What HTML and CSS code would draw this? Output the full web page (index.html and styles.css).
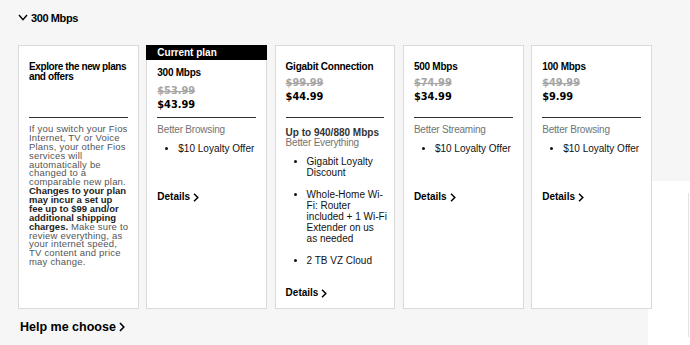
FILE: index.html
```html
<!DOCTYPE html>
<html lang="en">
<head>
<meta charset="utf-8">
<title>Plans</title>
<link rel="stylesheet" href="styles.css">
</head>
<body>
<div class="page">
  <div class="toggle">
    <svg class="chev-down" width="10" height="7" viewBox="0 0 10 7"><polyline points="1,1 5,5.6 9,1" fill="none" stroke="#000" stroke-width="1.4"/></svg>
    <span>300 Mbps</span>
  </div>

  <div class="cards">
    <div class="card">
      <div class="head intro-head">
        <div class="intro-title">Explore the new plans and offers</div>
      </div>
      <p class="intro-body">If you switch your Fios<br>Internet, TV or Voice<br>Plans, your other Fios<br>services will<br>automatically be<br>changed to a<br>comparable new plan.<br><b>Changes to your plan<br>may incur a set up<br>fee up to $99 and/or<br>additional shipping<br>charges.</b> Make sure to<br>review everything, as<br>your internet speed,<br>TV content and price<br>may change.</p>
    </div>

    <div class="card current">
      <div class="head">
        <div class="badge">Current plan</div>
        <div class="title">300 Mbps</div>
        <div class="old">$53.99</div>
        <div class="new">$43.99</div>
      </div>
      <div class="desc">Better Browsing</div>
      <ul class="features">
        <li>$10 Loyalty Offer</li>
      </ul>
      <a class="details">Details <svg width="6" height="9" viewBox="0 0 6 9"><polyline points="1,0.8 4.8,4.5 1,8.2" fill="none" stroke="#000" stroke-width="1.5"/></svg></a>
    </div>

    <div class="card">
      <div class="head">
        <div class="title">Gigabit Connection</div>
        <div class="old">$99.99</div>
        <div class="new">$44.99</div>
      </div>
      <div class="desc"><div class="speed">Up to 940/880 Mbps</div>Better Everything</div>
      <ul class="features">
        <li>Gigabit Loyalty Discount</li>
        <li class="nowrap">Whole-Home Wi-<br>Fi: Router<br>included + 1 Wi-Fi<br>Extender on us<br>as needed</li>
        <li>2 TB VZ Cloud</li>
      </ul>
      <a class="details">Details <svg width="6" height="9" viewBox="0 0 6 9"><polyline points="1,0.8 4.8,4.5 1,8.2" fill="none" stroke="#000" stroke-width="1.5"/></svg></a>
    </div>

    <div class="card">
      <div class="head">
        <div class="title">500 Mbps</div>
        <div class="old">$74.99</div>
        <div class="new">$34.99</div>
      </div>
      <div class="desc">Better Streaming</div>
      <ul class="features">
        <li>$10 Loyalty Offer</li>
      </ul>
      <a class="details">Details <svg width="6" height="9" viewBox="0 0 6 9"><polyline points="1,0.8 4.8,4.5 1,8.2" fill="none" stroke="#000" stroke-width="1.5"/></svg></a>
    </div>

    <div class="card">
      <div class="head">
        <div class="title">100 Mbps</div>
        <div class="old">$49.99</div>
        <div class="new">$9.99</div>
      </div>
      <div class="desc">Better Browsing</div>
      <ul class="features">
        <li>$10 Loyalty Offer</li>
      </ul>
      <a class="details">Details <svg width="6" height="9" viewBox="0 0 6 9"><polyline points="1,0.8 4.8,4.5 1,8.2" fill="none" stroke="#000" stroke-width="1.5"/></svg></a>
    </div>
  </div>

  <a class="help">Help me choose <svg width="6" height="10" viewBox="0 0 6 10"><polyline points="1,1 4.8,5 1,9" fill="none" stroke="#000" stroke-width="1.6"/></svg></a>
</div>
<div class="side-panel"><div class="side-line"></div></div>
</body>
</html>
```

FILE: styles.css
```css
html, body {
  background: #f6f6f6;
}
body {
  margin: 0;
  font-family: "Liberation Sans", Arial, sans-serif;
  color: #000;
  overflow: hidden;
}
.page {
  padding: 10px 0 0 18px;
}
.toggle {
  display: flex;
  align-items: center;
  gap: 3px;
  height: 15px;
  font-size: 11px;
  font-weight: bold;
  letter-spacing: -0.4px;
}
.chev-down {
  display: block;
}
.cards {
  display: flex;
  gap: 7.5px;
  width: 634px;
  margin-top: 20px;
  align-items: stretch;
}
.card {
  flex: 1 1 0;
  min-width: 0;
  background: #fff;
  border: 1px solid #dadada;
  padding: 0 10px 9px;
  display: flex;
  flex-direction: column;
  position: relative;
  z-index: 1;
}
.head {
  box-sizing: border-box;
  height: 72px;
  padding-top: 15px;
  border-bottom: 1px solid #333;
}
.intro-head {
  padding-top: 16px;
}
.intro-title {
  font-size: 10px;
  font-weight: bold;
  line-height: 10px;
  letter-spacing: -0.4px;
}
.intro-body {
  margin: 7px 0 0;
  font-size: 9.5px;
  line-height: 8.87px;
  letter-spacing: 0.2px;
  color: #555;
  white-space: nowrap;
}
.intro-body b {
  color: #1d1d1d;
  letter-spacing: 0;
}
.current .head {
  padding-top: 0;
}
.badge {
  margin: -1px -11px 7px;
  height: 15px;
  line-height: 15px;
  padding-left: 11px;
  background: #000;
  color: #fff;
  font-size: 10px;
  font-weight: bold;
}
.title {
  font-size: 10px;
  font-weight: bold;
  line-height: 12px;
  letter-spacing: -0.25px;
}
.old, .new {
  font-family: "DejaVu Sans", sans-serif;
  font-weight: bold;
  font-size: 9.8px;
  line-height: 14px;
}
.old {
  margin-top: 3px;
  color: #a6a6a6;
  text-decoration: line-through;
}
.current .old {
  margin-top: 5px;
}
.desc {
  margin-top: 7px;
  font-size: 10px;
  line-height: 10px;
  color: #727474;
  letter-spacing: -0.2px;
}
.speed {
  margin-top: 3px;
  font-weight: bold;
  color: #333;
  letter-spacing: 0;
}
.features {
  margin: 8px 0 0;
  padding-left: 21px;
  min-height: 27px;
  font-size: 10px;
  line-height: 11px;
  color: #111;
}
.features li + li {
  margin-top: 11px;
}
.nowrap {
  white-space: nowrap;
}
.details {
  margin-top: 21px;
  display: flex;
  align-items: center;
  gap: 3px;
  height: 12px;
  font-size: 10px;
  font-weight: bold;
  line-height: 12px;
}
.details svg {
  display: block;
}
.help {
  display: flex;
  align-items: center;
  gap: 3px;
  margin: 10px 0 0 2px;
  height: 16px;
  font-size: 12.5px;
  font-weight: bold;
  line-height: 16px;
}
.help svg {
  display: block;
}
.side-panel {
  position: absolute;
  left: 648px;
  top: 181px;
  width: 42px;
  height: 164px;
  background: #fff;
  z-index: 0;
}
.side-line {
  position: absolute;
  left: 40px;
  top: 12px;
  bottom: 8px;
  width: 1px;
  background: #e2e2e2;
}
```
